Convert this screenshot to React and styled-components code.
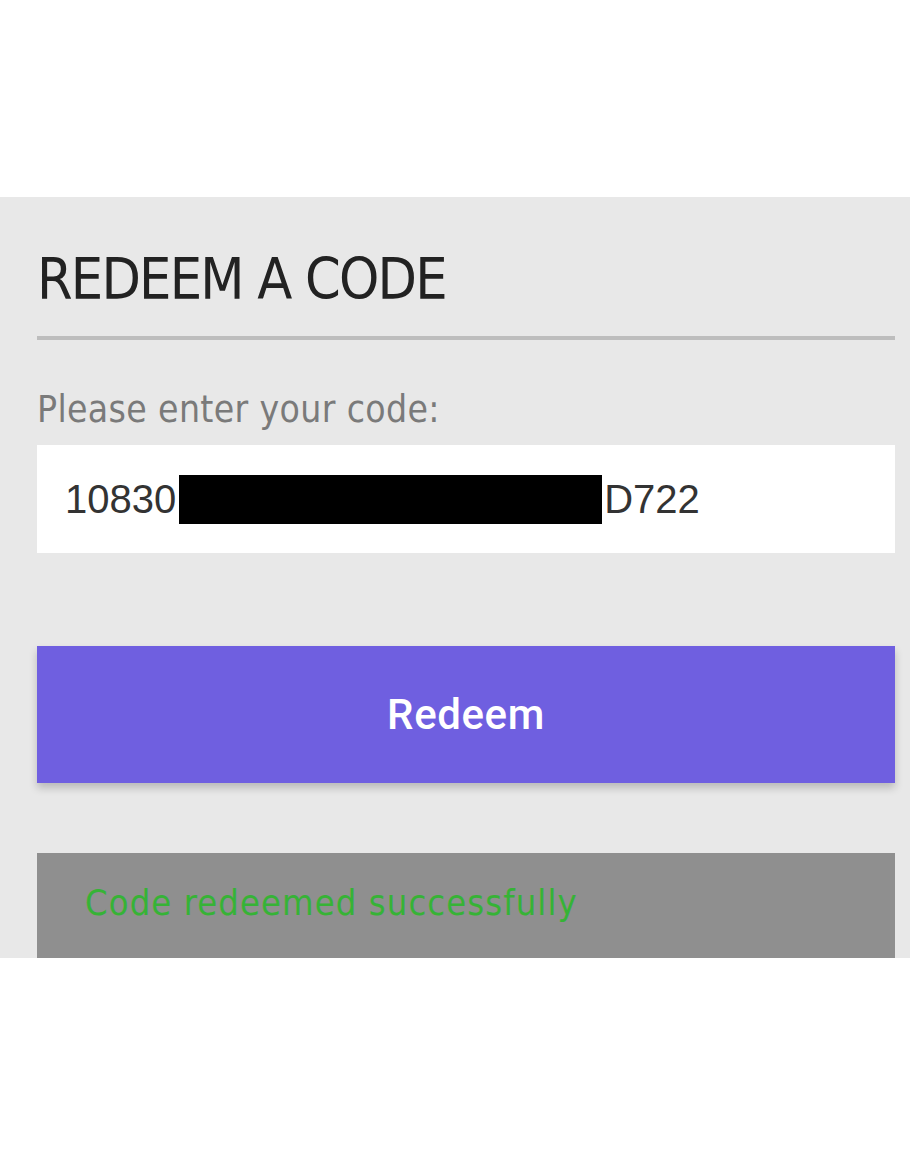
import React from "react"
import styled, { createGlobalStyle } from "styled-components"

const GlobalStyle = createGlobalStyle`
  html, body {
    margin: 0;
    padding: 0;
    background: #ffffff;
  }
`

const Page = styled.div`
  width: 910px;
  height: 1155px;
  background: #ffffff;
  padding-top: 197px;
  box-sizing: border-box;
`

const Panel = styled.section`
  background: #e8e8e8;
  height: 761px;
  padding: 0 15px 0 37px;
  box-sizing: border-box;
  overflow: hidden;
  display: flex;
  flex-direction: column;

  & > * {
    flex-shrink: 0;
  }
`

const Title = styled.h1`
  margin: 0;
  padding-top: 52px;
  height: 87px;
  box-sizing: border-box;
  font-family: "DejaVu Sans Condensed", "DejaVu Sans", sans-serif;
  font-weight: normal;
  font-size: 57px;
  letter-spacing: -1.8px;
  line-height: 60px;
  color: #222222;
`

const Divider = styled.hr`
  margin: 52px 0 0;
  border: none;
  height: 4px;
  background: #bdbdbd;
`

const Label = styled.label`
  margin-top: 50px;
  font-family: "DejaVu Sans Condensed", "DejaVu Sans", sans-serif;
  font-size: 37px;
  letter-spacing: 0.35px;
  line-height: 40px;
  color: #7a7a7a;
`

const CodeField = styled.div`
  margin-top: 15px;
  height: 108px;
  background: #ffffff;
  display: flex;
  align-items: center;
  padding-left: 28px;
  font-family: "Liberation Sans", Arial, sans-serif;
  font-size: 40px;
  color: #333333;
`

const Redacted = styled.span`
  display: inline-block;
  width: 423px;
  height: 49px;
  background: #000000;
  margin: 0 2px 0 3px;
`

const RedeemButton = styled.button`
  margin-top: 93px;
  height: 137px;
  border: none;
  background: #6f5fe0;
  color: #ffffff;
  font-family: "Roboto", "Liberation Sans", sans-serif;
  font-weight: 500;
  font-size: 42px;
  letter-spacing: 0.6px;
  box-shadow: 0 5px 8px rgba(0, 0, 0, 0.2);
  cursor: pointer;
`

const Message = styled.div`
  margin-top: 70px;
  height: 110px;
  background: #8f8f8f;
  padding: 29px 0 0 48px;
  box-sizing: border-box;
  font-family: "DejaVu Sans Condensed", "DejaVu Sans", sans-serif;
  font-size: 36px;
  letter-spacing: 1.1px;
  color: ${props => props.$color};
`

const App = () => {
  return (
    <>
      <GlobalStyle />
      <Page>
        <Panel>
          <Title>REDEEM A CODE</Title>
          <Divider />
          <Label>Please enter your code:</Label>
          <CodeField>
            10830<Redacted />D722
          </CodeField>
          <RedeemButton>Redeem</RedeemButton>
          <Message $color="#36b336">Code redeemed successfully</Message>
        </Panel>
      </Page>
    </>
  )
}

export default App
